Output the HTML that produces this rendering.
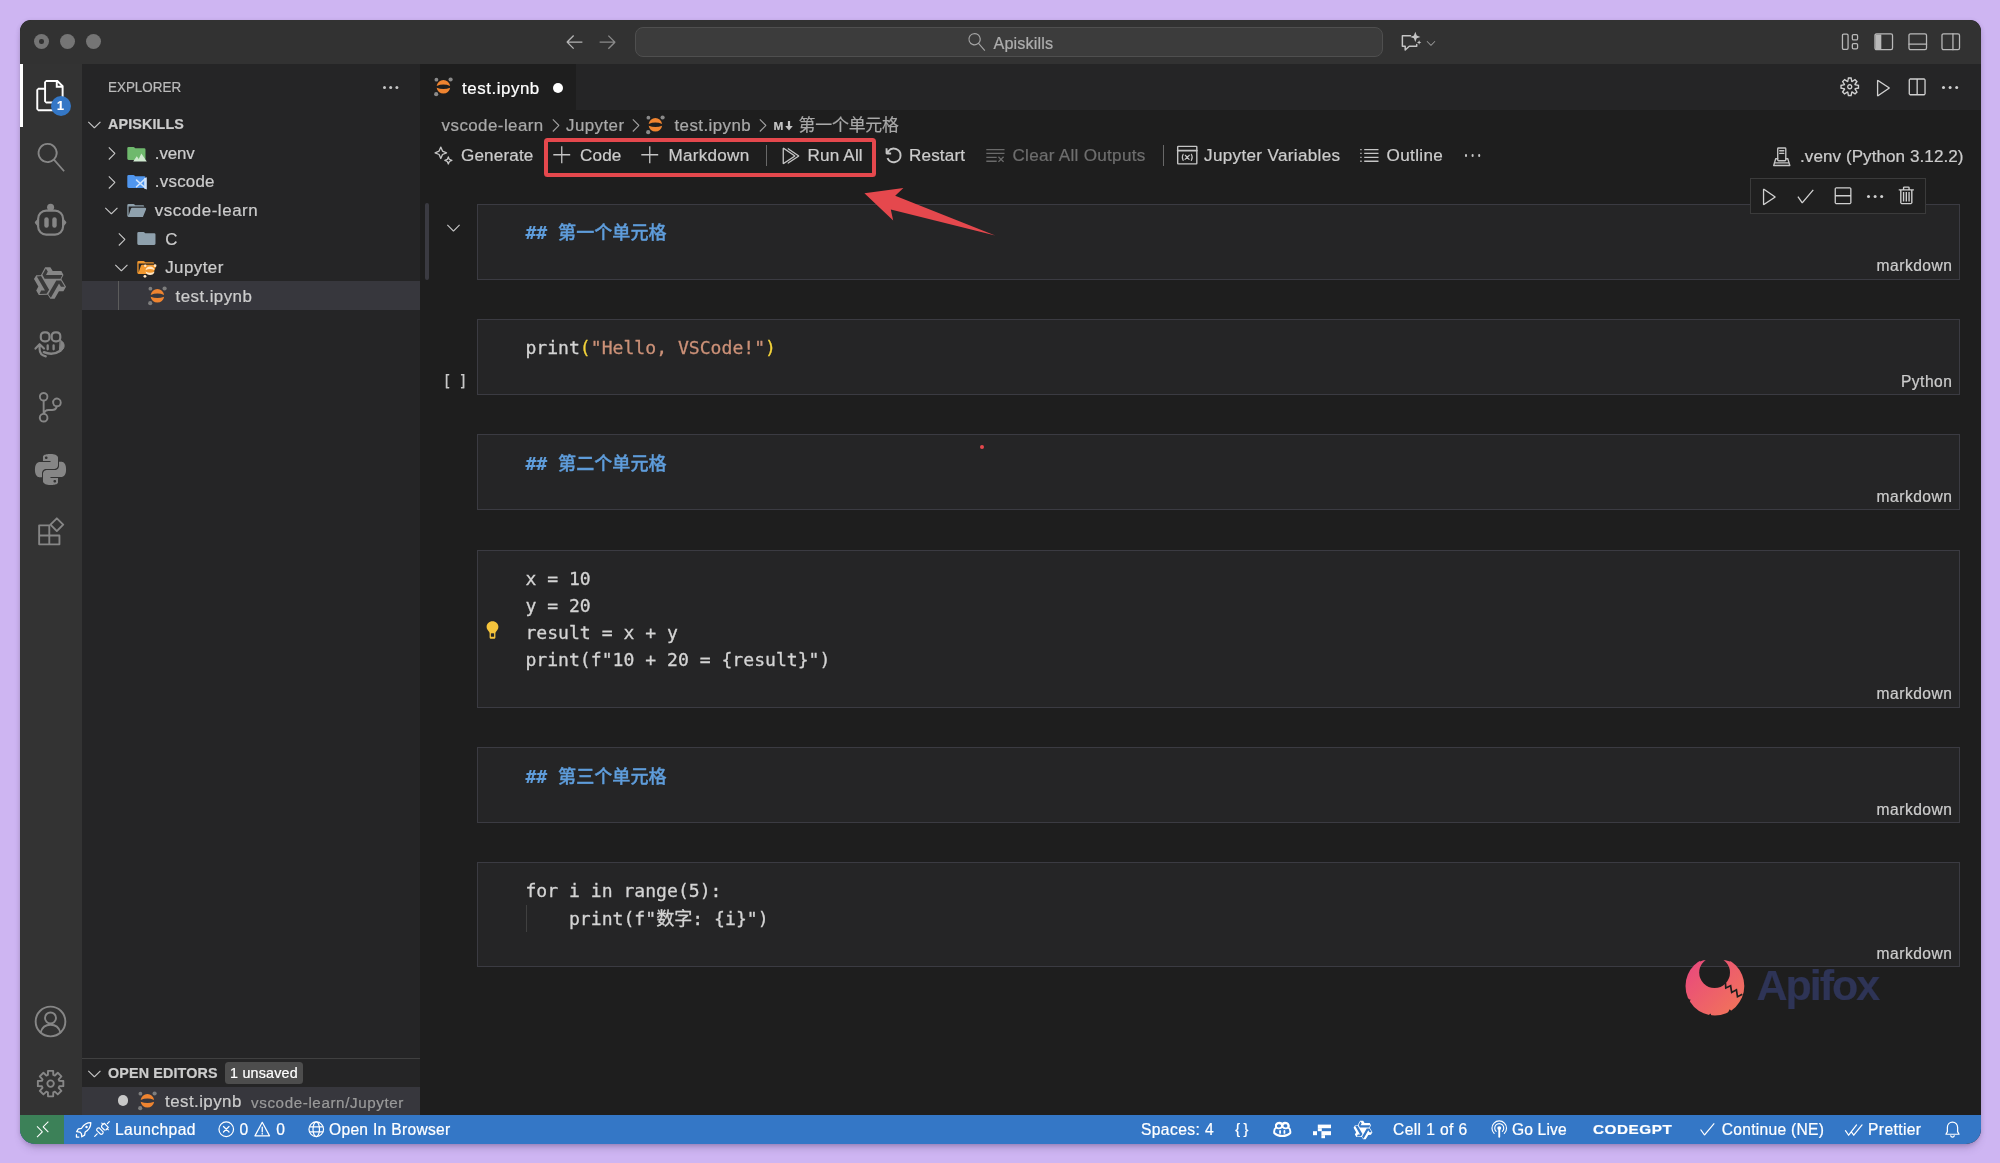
<!DOCTYPE html>
<html lang="zh">
<head>
<meta charset="utf-8">
<title>test.ipynb — Apiskills</title>
<style>
*{box-sizing:border-box;margin:0;padding:0}
html,body{width:2000px;height:1163px;overflow:hidden}
body{background:#ceb5f2;-webkit-font-smoothing:antialiased;-webkit-text-stroke:.22px;font-family:"Liberation Sans","Noto Sans CJK SC",sans-serif;color:#ccc;position:relative}
.abs{position:absolute}
svg{display:block;overflow:visible}
#win{will-change:transform;position:absolute;left:20px;top:20px;width:1960.7px;height:1123.7px;border-radius:11px 11px 15px 15px;overflow:hidden;background:#1e1e1e}
#shadow{position:absolute;left:20px;top:20px;width:1960.7px;height:1123.7px;border-radius:11px 11px 15px 15px;box-shadow:0 6px 10px -4px rgba(70,50,95,.36),0 1px 4px rgba(70,50,95,.2)}
#title{position:absolute;left:0;top:0;width:1961px;height:44.5px;background:#323232;border-radius:11px 11px 0 0}
.tl{position:absolute;top:13.5px;width:15.5px;height:15.5px;border-radius:50%;background:#757575}
#cmd{position:absolute;left:615px;top:6.5px;width:748px;height:30.3px;border-radius:8px;background:#3c3c3c;border:1.3px solid #4f4f4f}
#cmd span{position:absolute;left:357.5px;top:5.2px;font-size:16.2px;line-height:20px;color:#adadad;letter-spacing:.15px}
#act{position:absolute;left:0;top:44px;width:62px;height:1051px;background:#333333}
#act .ind{position:absolute;left:0;top:0;width:2.5px;height:63px;background:#fff}
#side{position:absolute;left:62px;top:44px;width:338px;height:1051px;background:#252526}
.row{position:absolute;left:0;width:338px;height:28.6px;font-size:16.9px;color:#ccc;white-space:nowrap;letter-spacing:.45px}
.row .t{position:absolute;top:4.6px;line-height:20px}
#tabs{position:absolute;left:400px;top:44px;width:1561px;height:46px;background:#252526}
#tab{position:absolute;left:0;top:0;width:156px;height:46px;background:#1e1e1e}
#ed{position:absolute;left:400px;top:90px;width:1561px;height:1006px;background:#1e1e1e}
.cell{position:absolute;left:57.4px;width:1482.6px;background:#252526;border:1px solid #3b3b42}
.code{font-family:"DejaVu Sans Mono","Liberation Mono",monospace;font-size:18.1px;line-height:27.3px;color:#d4d4d4;white-space:pre;position:absolute;left:47px;-webkit-text-stroke:.3px}
.cj{font-family:"Liberation Sans","Noto Sans CJK SC",sans-serif;font-size:18.1px;line-height:0}
.lang{position:absolute;right:6.5px;bottom:2.3px;font-size:15.6px;color:#ccc;line-height:20px;letter-spacing:.5px}
.md{color:#5f9ddb;font-weight:bold;-webkit-text-stroke:.1px}
.md .cj{font-weight:500;-webkit-text-stroke:.35px}
#status{position:absolute;left:0;top:1095.1px;width:1961px;height:29px;background:#3477c6;color:#fff;font-size:15.6px;white-space:nowrap;letter-spacing:.4px}
#status .s{position:absolute;top:5.3px;line-height:20px}
#remote{position:absolute;left:0;top:0;width:43.7px;height:29px;background:#3c8158}
</style>
</head>
<body>
<div id="shadow"></div>
<div id="win">
<div id="title"><div class="tl" style="left:13.8px"></div><div class="tl" style="left:39.8px"></div><div class="tl" style="left:65.8px"></div><div class="abs" style="left:19.3px;top:19px;width:4.5px;height:4.5px;border-radius:50%;background:#323232"></div><div class="abs" style="left:543.5px;top:11px;"><svg width="21" height="21" viewBox="0 0 16 16" fill="#b4b4b4"><path d="M7 3.093l-5 5V8.8l5 5 .707-.707-4.146-4.147H14v-1H3.56L7.707 3.8 7 3.093z"/></svg></div><div class="abs" style="left:577px;top:11px;"><svg width="21" height="21" viewBox="0 0 16 16" fill="#8a8a8a"><path d="M9 13.887l5-5V8.18l-5-5-.707.707 4.146 4.147H2v1h10.44L8.293 13.18l.707.707z"/></svg></div><div id="cmd"><div class="abs" style="left:332px;top:5.6px;"><svg width="18" height="18" viewBox="0 0 24 24" fill="#a4a4a4" transform="scale(-1,1)"><path d="M15.25 0a8.25 8.25 0 0 0-6.18 13.72L1 22.88l1.12 1 8.05-9.12A8.251 8.251 0 1 0 15.25.010V0zm0 15a6.75 6.75 0 1 1 0-13.5 6.75 6.75 0 0 1 0 13.5z"/></svg></div><span>Apiskills</span></div><div class="abs" style="left:1378.5px;top:10.5px;"><svg width="22.5" height="22.5" viewBox="0 0 16 16" fill="none" stroke="#c5c5c5" stroke-width="1.05" stroke-linejoin="round" stroke-linecap="round"><path d="M8.2 3.4H2.4v7.4h2v2.7l2.9-2.7h5.3V9.6"/><path d="M11.6.600l1 2.6 2.6 1-2.6 1-1 2.6-1-2.6-2.6-1 2.6-1z" fill="#c5c5c5" stroke="none"/><path d="M14.3 6.5l.45 1.15 1.15.45-1.15.45-.45 1.15-.45-1.15-1.15-.45 1.15-.45z" fill="#c5c5c5" stroke="none"/></svg></div><div class="abs" style="left:1403.5px;top:15.5px;"><svg width="14" height="14" viewBox="0 0 16 16" fill="#a0a0a0"><path d="M7.976 10.072l4.357-4.357.62.618L8.284 11h-.618L3 6.333l.619-.618 4.357 4.357z"/></svg></div><div class="abs" style="left:1821px;top:12px;"><svg width="19.5" height="19.5" viewBox="0 0 16 16" fill="none" stroke="#b9b9b9" stroke-width="1.05" stroke-linejoin="round" stroke-linecap="round"><rect x="1.2" y="1.8" width="4.6" height="12.4" rx="1"/><rect x="9.3" y="2.2" width="4.3" height="4.3" rx="1"/><rect x="9.3" y="9.5" width="4.3" height="4.3" rx="1"/></svg></div><div class="abs" style="left:1854px;top:12px;"><svg width="19.5" height="19.5" viewBox="0 0 16 16" fill="none" stroke="#b9b9b9" stroke-width="1.05" stroke-linejoin="round" stroke-linecap="round"><rect x=".8" y="1.5" width="14.4" height="13" rx="1.3"/><path d="M1.2 2h4.8v12H1.2z" fill="#b9b9b9" stroke="none"/></svg></div><div class="abs" style="left:1887.5px;top:12px;"><svg width="19.5" height="19.5" viewBox="0 0 16 16" fill="none" stroke="#b9b9b9" stroke-width="1.05" stroke-linejoin="round" stroke-linecap="round"><rect x=".8" y="1.5" width="14.4" height="13" rx="1.3"/><path d="M.8 10h14.4"/></svg></div><div class="abs" style="left:1921px;top:12px;"><svg width="19.5" height="19.5" viewBox="0 0 16 16" fill="none" stroke="#b9b9b9" stroke-width="1.05" stroke-linejoin="round" stroke-linecap="round"><rect x=".8" y="1.5" width="14.4" height="13" rx="1.3"/><path d="M9.8 1.5v13"/></svg></div></div>
<div id="act"><div class="ind"></div><div class="abs" style="left:15.4px;top:16.300000000000004px;"><svg width="31.2" height="31.2" viewBox="0 0 24 24" fill="#ffffff"><path d="M17.5 0h-9L7 1.5V6H2.5L1 7.5v15.07L2.5 24h12.07L16 22.57V18h4.7l1.3-1.43V4.5L17.5 0zm0 2.12l2.38 2.38H17.5V2.12zm-3 20.38h-12v-15H7v9.07L8.5 18h6v4.5zm6-6h-12v-15H16V6h4.5v10.5z"/></svg></div><div class="abs" style="left:30.5px;top:32px;width:20px;height:20px;border-radius:50%;background:#3477c6;color:#fff;font-size:12.5px;font-weight:bold;line-height:20px;text-align:center">1</div><div class="abs" style="left:16.5px;top:79px;"><svg width="29" height="29" viewBox="0 0 24 24" fill="#868686" transform="scale(-1,1)"><path d="M15.25 0a8.25 8.25 0 0 0-6.18 13.72L1 22.88l1.12 1 8.05-9.12A8.251 8.251 0 1 0 15.25.010V0zm0 15a6.75 6.75 0 1 1 0-13.5 6.75 6.75 0 0 1 0 13.5z"/></svg></div><div class="abs" style="left:14.799999999999997px;top:141.4px;"><svg width="31.2" height="31.2" viewBox="0 0 24 24" fill="none" stroke="#868686" stroke-width="1.65" stroke-linejoin="round" stroke-linecap="round"><rect x="2.4" y="4.3" width="19.2" height="18.5" rx="6.2"/><circle cx="12" cy="1.7" r="2.7" fill="#868686" stroke="none"/><path d="M2.4 11.4L.700 13.5l1.7 2.1M21.6 11.4l1.7 2.1-1.7 2.1"/><rect x="7.15" y="9.5" width="3.4" height="8" rx="1.7" fill="#868686" stroke="none"/><rect x="13.3" y="9.5" width="3.4" height="8" rx="1.7" fill="#868686" stroke="none"/></svg></div><svg class="abs" style="left:30.4px;top:218.60000000000002px" width="1" height="1" viewBox="0 0 1 1"><polygon points="-4.87,-15.7 0.36,-15.7 2.7,-11.9 11.4,-11.9 13.5,-8.1 11.4,-4 16.03,3.63 13.42,8.16 8.96,8.29 4.61,15.82 0.26,15.74 -2.24,11.87 -11.16,12.07 -13.78,7.54 -11.66,3.61 -16.01,-3.92 -13.76,-7.64 -9.16,-7.87" fill="#868686"/><polygon points="-4.15,-14.6 -2.2,-11.4 -4,-8.1 12.3,-8.1 10.6,-4.15 -5.4,-4.15 -7.6,-8.3" fill="#3a3a3a"/><polygon points="14.72,3.71 10.97,3.79 9.01,0.59 0.86,14.7 -1.71,11.25 6.29,-2.6 10.99,-2.43" fill="#3a3a3a"/><polygon points="-10.57,10.89 -8.77,7.61 -5.01,7.51 -13.16,-6.6 -8.89,-7.1 -0.89,6.75 -3.39,10.73" fill="#3a3a3a"/></svg><div class="abs" style="left:10px;top:260px;"><svg width="42" height="42" viewBox="0 0 42 42" fill="none" stroke="#868686" stroke-width="2.15" stroke-linejoin="round" stroke-linecap="round"><rect x="10.8" y="8.3" width="8.7" height="9" rx="3.6"/><rect x="21.7" y="8.3" width="8.6" height="9" rx="3.6"/><path d="M30.4 16.3C34.6 18 35 22.5 33 25.2c-.900 1.2-2 2-3.3 2.5z" fill="#868686" stroke-width="1"/><path d="M13.9 28.2c5.5 2.4 12 1.6 16.4-1.5" stroke-width="2.5"/><path d="M17.7 21.4v3.9M23.6 21.4v3.9" stroke-width="2.3"/><path d="M5.5 24.6l4.1-4.4 4.4 4.4M9.6 20.6v4.4c0 4 2.4 6.6 6.2 7.4"/></svg></div><div class="abs" style="left:14.950000000000003px;top:328.05px;"><svg width="30.5" height="30.5" viewBox="0 0 24 24" fill="#868686"><path d="M21.007 8.222A3.738 3.738 0 0 0 15.045 5.2a3.737 3.737 0 0 0 1.156 6.583 2.988 2.988 0 0 1-2.668 1.67h-2.99a4.456 4.456 0 0 0-2.989 1.165V7.4a3.737 3.737 0 1 0-1.494 0v9.117a3.776 3.776 0 1 0 1.816.099 2.99 2.99 0 0 1 2.668-1.667h2.99a4.484 4.484 0 0 0 4.223-3.039 3.736 3.736 0 0 0 3.25-3.687zM4.565 3.738a2.242 2.242 0 1 1 4.484 0 2.242 2.242 0 0 1-4.484 0zm4.484 16.441a2.242 2.242 0 1 1-4.484 0 2.242 2.242 0 0 1 4.484 0zm8.221-9.715a2.242 2.242 0 1 1 0-4.485 2.242 2.242 0 0 1 0 4.485z"/></svg></div><div class="abs" style="left:15.100000000000001px;top:390px;"><svg width="31" height="31" viewBox="0 0 24 24" fill="#868686"><path d="M14.25.18l.9.2.73.26.59.3.45.32.34.34.25.34.16.33.1.3.04.26.02.2-.01.13V8.5l-.05.63-.13.55-.21.46-.26.38-.3.31-.33.25-.35.19-.35.14-.33.1-.3.07-.26.04-.21.02H8.77l-.69.05-.59.14-.5.22-.41.27-.33.32-.27.35-.2.36-.15.37-.1.35-.07.32-.04.27-.02.21v3.06H3.17l-.21-.03-.28-.07-.32-.12-.35-.18-.36-.26-.36-.36-.35-.46-.32-.59-.28-.73-.21-.88-.14-1.05-.05-1.23.06-1.22.16-1.04.24-.87.32-.71.36-.57.4-.44.42-.33.42-.24.4-.16.36-.1.32-.05.24-.01h.16l.06.01h8.16v-.83H6.18l-.01-2.75-.02-.37.05-.34.11-.31.17-.28.25-.26.31-.23.38-.2.44-.18.51-.15.58-.12.64-.1.71-.06.77-.04.84-.02 1.27.05zm-6.3 1.98l-.23.33-.08.41.08.41.23.34.33.22.41.09.41-.09.33-.22.23-.34.08-.41-.08-.41-.23-.33-.33-.22-.41-.09-.41.09zm13.09 3.95l.28.06.32.12.35.18.36.27.36.35.35.47.32.59.28.73.21.88.14 1.04.05 1.23-.06 1.23-.16 1.04-.24.86-.32.71-.36.57-.4.45-.42.33-.42.24-.4.16-.36.09-.32.05-.24.02-.16-.01h-8.22v.82h5.84l.01 2.76.02.36-.05.34-.11.31-.17.29-.25.25-.31.24-.38.2-.44.17-.51.15-.58.13-.64.09-.71.07-.77.04-.84.01-1.27-.04-1.07-.14-.9-.2-.73-.25-.59-.3-.45-.33-.34-.34-.25-.34-.16-.33-.1-.3-.04-.25-.02-.2.01-.13v-5.34l.05-.64.13-.54.21-.46.26-.38.3-.32.33-.24.35-.2.35-.14.33-.1.3-.06.26-.04.21-.02.13-.01h5.84l.69-.05.59-.14.5-.21.41-.28.33-.32.27-.35.2-.36.15-.36.1-.35.07-.32.04-.28.02-.21V6.07h2.09l.14.01zm-6.47 14.25l-.23.33-.08.41.08.41.23.33.33.23.41.08.41-.08.33-.23.23-.33.08-.41-.08-.41-.23-.33-.33-.23-.41-.08-.41.08z"/></svg></div><div class="abs" style="left:15.4px;top:452.4px;"><svg width="31.2" height="31.2" viewBox="0 0 24 24" fill="none" stroke="#868686" stroke-width="1.45" stroke-linejoin="round" stroke-linecap="round"><path d="M3.2 7.2h7.8v7.8H3.2zM3.2 15h7.8v6.8H3.2zM11 15h7.8v6.8H11z"/><path d="M16.8 1.8l4.9 4.9-4.9 4.9-4.9-4.9z"/></svg></div><div class="abs" style="left:13.899999999999999px;top:940.8px;"><svg width="33" height="33" viewBox="0 0 24 24" fill="none" stroke="#868686" stroke-width="1.4" stroke-linejoin="round" stroke-linecap="round"><circle cx="12" cy="12" r="10.8"/><circle cx="12" cy="9.4" r="4"/><path d="M4.8 20c1-3.6 3.8-5.6 7.2-5.6s6.2 2 7.2 5.6"/></svg></div><div class="abs" style="left:14.799999999999997px;top:1004.3000000000002px;"><svg width="31.2" height="31.2" viewBox="0 0 24 24" fill="none" stroke="#868686" stroke-width="1.45" stroke-linejoin="round" stroke-linecap="round"><path d="M9.93 5.31L10.01 2.2L13.99 2.2L14.07 5.31L15.27 5.81L17.53 3.67L20.33 6.47L18.19 8.73L18.69 9.93L21.8 10.01L21.8 13.99L18.69 14.07L18.19 15.27L20.33 17.53L17.53 20.33L15.27 18.19L14.07 18.69L13.99 21.8L10.01 21.8L9.93 18.69L8.73 18.19L6.47 20.33L3.67 17.53L5.81 15.27L5.31 14.07L2.2 13.99L2.2 10.01L5.31 9.93L5.81 8.73L3.67 6.47L6.47 3.67L8.73 5.81Z"/><circle cx="12" cy="12" r="2.5"/></svg></div></div>
<div id="side"><div class="abs" style="left:26px;top:13px;font-size:15px;line-height:20px;color:#bbb;letter-spacing:0;transform:scaleX(.895);transform-origin:0 50%">EXPLORER</div><div class="abs" style="left:300.5px;top:21.8px;width:3px;height:3px;border-radius:50%;background:#c5c5c5;box-shadow:6.2px 0 0 #c5c5c5,12.4px 0 0 #c5c5c5"></div><div class="abs" style="left:2px;top:49.5px;"><svg width="20.8" height="20.8" viewBox="0 0 16 16" fill="#c5c5c5"><path d="M7.976 10.072l4.357-4.357.62.618L8.284 11h-.618L3 6.333l.619-.618 4.357 4.357z"/></svg></div><div class="abs" style="left:26px;top:50.3px;font-size:14.3px;line-height:20px;color:#ccc;font-weight:bold;letter-spacing:.15px">APISKILLS</div><div class="row" style="top:75.2px;"><div class="abs" style="left:18.5px;top:3.9px;"><svg width="20.8" height="20.8" viewBox="0 0 16 16" fill="#c5c5c5"><path d="M10.072 8.024L5.715 3.667l.618-.62L11 7.716v.618L6.333 13l-.618-.619 4.357-4.357z"/></svg></div><div class="abs" style="left:43.6px;top:3.4px;"><svg width="20.8" height="20.8" viewBox="0 0 32 32"><path d="M13.84376,7.53645l-1.28749-1.0729A2,2,0,0,0,11.27591,6H4A2,2,0,0,0,2,8V24a2,2,0,0,0,2,2H28a2,2,0,0,0,2-2V10a2,2,0,0,0-2-2H15.12412A2,2,0,0,1,13.84376,7.53645Z" fill="#6fb96d"/><path d="M11 28.6L16.6 20.4L19.6 24.6L23.6 16.2L32 28.6Z" fill="#cfe9cf"/></svg></div><div class="t" style="left:72.8px;top:4.6px"><span style="letter-spacing:-.1px">.venv</span></div></div><div class="row" style="top:103.8px;"><div class="abs" style="left:18.5px;top:3.9px;"><svg width="20.8" height="20.8" viewBox="0 0 16 16" fill="#c5c5c5"><path d="M10.072 8.024L5.715 3.667l.618-.62L11 7.716v.618L6.333 13l-.618-.619 4.357-4.357z"/></svg></div><div class="abs" style="left:43.6px;top:3.4px;"><svg width="20.8" height="20.8" viewBox="0 0 32 32"><path d="M13.84376,7.53645l-1.28749-1.0729A2,2,0,0,0,11.27591,6H4A2,2,0,0,0,2,8V24a2,2,0,0,0,2,2H28a2,2,0,0,0,2-2V10a2,2,0,0,0-2-2H15.12412A2,2,0,0,1,13.84376,7.53645Z" fill="#5096ee"/><g stroke="#cfe3fb" stroke-width="2.4" fill="none" stroke-linecap="round"><path d="M29.5 12.2L16.2 24.2M29.5 25.8L16.2 14"/></g><path d="M28 11.2l4-1.6v19l-4-1.8z" fill="#cfe3fb"/></svg></div><div class="t" style="left:72.8px;top:4.6px"><span style="letter-spacing:.25px">.vscode</span></div></div><div class="row" style="top:132.4px;"><div class="abs" style="left:18.5px;top:3.9px;"><svg width="20.8" height="20.8" viewBox="0 0 16 16" fill="#c5c5c5"><path d="M7.976 10.072l4.357-4.357.62.618L8.284 11h-.618L3 6.333l.619-.618 4.357 4.357z"/></svg></div><div class="abs" style="left:43.6px;top:3.4px;"><svg width="20.8" height="20.8" viewBox="0 0 32 32"><path d="M28.96692,12H9.44152a2,2,0,0,0-1.89737,1.36754L4,24V10H28a2,2,0,0,0-2-2H15.1241a2,2,0,0,1-1.28038-.46357L12.5563,6.46357A2,2,0,0,0,11.27592,6H4A2,2,0,0,0,2,8V24a2,2,0,0,0,2,2H26l4.80523-11.21213A2,2,0,0,0,28.96692,12Z" fill="#8fa1ad"/></svg></div><div class="t" style="left:72.8px;top:4.6px"><span style="letter-spacing:.56px">vscode-learn</span></div></div><div class="row" style="top:161px;"><div class="abs" style="left:29px;top:3.9px;"><svg width="20.8" height="20.8" viewBox="0 0 16 16" fill="#c5c5c5"><path d="M10.072 8.024L5.715 3.667l.618-.62L11 7.716v.618L6.333 13l-.618-.619 4.357-4.357z"/></svg></div><div class="abs" style="left:54px;top:3.4px;"><svg width="20.8" height="20.8" viewBox="0 0 32 32"><path d="M13.84376,7.53645l-1.28749-1.0729A2,2,0,0,0,11.27591,6H4A2,2,0,0,0,2,8V24a2,2,0,0,0,2,2H28a2,2,0,0,0,2-2V10a2,2,0,0,0-2-2H15.12412A2,2,0,0,1,13.84376,7.53645Z" fill="#8fa1ad"/></svg></div><div class="t" style="left:83.2px;top:4.6px">C</div></div><div class="row" style="top:189.6px;"><div class="abs" style="left:29px;top:3.9px;"><svg width="20.8" height="20.8" viewBox="0 0 16 16" fill="#c5c5c5"><path d="M7.976 10.072l4.357-4.357.62.618L8.284 11h-.618L3 6.333l.619-.618 4.357 4.357z"/></svg></div><div class="abs" style="left:54px;top:3.4px;"><svg width="20.8" height="20.8" viewBox="0 0 32 32"><path d="M28.96692,12H9.44152a2,2,0,0,0-1.89737,1.36754L4,24V10H28a2,2,0,0,0-2-2H15.1241a2,2,0,0,1-1.28038-.46357L12.5563,6.46357A2,2,0,0,0,11.27592,6H4A2,2,0,0,0,2,8V24a2,2,0,0,0,2,2H26l4.80523-11.21213A2,2,0,0,0,28.96692,12Z" fill="#f1982f"/><path d="M14.6 20.3a7.2 7.2 0 0 1 14 0q-7-3.6-14 0z" fill="#ffe6c4"/><path d="M14.6 22.3a7.2 7.2 0 0 0 14 0q-7 3.6-14 0z" fill="#ffe6c4"/><circle cx="14.2" cy="13.6" r="1.9" fill="#ffe6c4"/><circle cx="29.4" cy="13.4" r="2.1" fill="#ffe6c4"/><circle cx="13.8" cy="29.8" r="2.2" fill="#ffe6c4"/></svg></div><div class="t" style="left:83.2px;top:4.6px">Jupyter</div></div><div class="row" style="top:217.2px;background:#37373d;"><div class="abs" style="left:64.5px;top:4.5px;"><svg width="20.8" height="20.8" viewBox="0 0 20.8 20.8"><path d="M3.66 8.9A6.8 6.8 0 0 1 17.14 8.9Q10.4 6.3 3.66 8.9Z" fill="#ef8430"/><path d="M3.66 10.7A6.8 6.8 0 0 0 17.14 10.7Q10.4 13.3 3.66 10.7Z" fill="#ef8430"/><circle cx="3.4" cy="2.7" r="1.9" fill="#7d7d7d"/><circle cx="17.6" cy="2.5" r="2.1" fill="#7d7d7d"/><circle cx="3.2" cy="17.2" r="2.1" fill="#7d7d7d"/></svg></div><div class="t" style="left:93.5px;top:6px">test.ipynb</div><div class="abs" style="left:36px;top:0;width:1px;height:28.6px;background:#5c5c5c"></div></div><div class="abs" style="left:0;top:994.2px;width:338px;height:1.2px;background:#404040"></div><div class="abs" style="left:2px;top:998.6px;"><svg width="20.8" height="20.8" viewBox="0 0 16 16" fill="#c5c5c5"><path d="M7.976 10.072l4.357-4.357.62.618L8.284 11h-.618L3 6.333l.619-.618 4.357 4.357z"/></svg></div><div class="abs" style="left:26px;top:999.2px;font-size:14.3px;line-height:20px;color:#ccc;font-weight:bold;letter-spacing:.15px">OPEN EDITORS</div><div class="abs" style="left:143.2px;top:998.2px;width:77.6px;height:22px;border-radius:3.5px;background:#4d4d4d;color:#fff;font-size:14.3px;line-height:22px;text-align:center;white-space:nowrap;letter-spacing:.2px">1 unsaved</div><div class="row" style="top:1022.6px;background:#37373d;height:28px"><div class="abs" style="left:35.6px;top:8.6px;width:10.6px;height:10.6px;border-radius:50%;background:#c8c8c8"></div><div class="abs" style="left:54.5px;top:4.6px;"><svg width="20.8" height="20.8" viewBox="0 0 20.8 20.8"><path d="M3.66 8.9A6.8 6.8 0 0 1 17.14 8.9Q10.4 6.3 3.66 8.9Z" fill="#ef8430"/><path d="M3.66 10.7A6.8 6.8 0 0 0 17.14 10.7Q10.4 13.3 3.66 10.7Z" fill="#ef8430"/><circle cx="3.4" cy="2.7" r="1.9" fill="#7d7d7d"/><circle cx="17.6" cy="2.5" r="2.1" fill="#7d7d7d"/><circle cx="3.2" cy="17.2" r="2.1" fill="#7d7d7d"/></svg></div><div class="t" style="left:83px;top:5.6px">test.ipynb</div><div class="t" style="left:169px;font-size:15.2px;color:#9a9a9a;top:6px;letter-spacing:.6px">vscode-learn/Jupyter</div></div></div>
<div id="tabs"><div id="tab"><div class="abs" style="left:12.5px;top:13.3px;"><svg width="20.8" height="20.8" viewBox="0 0 20.8 20.8"><path d="M3.66 8.9A6.8 6.8 0 0 1 17.14 8.9Q10.4 6.3 3.66 8.9Z" fill="#ef8430"/><path d="M3.66 10.7A6.8 6.8 0 0 0 17.14 10.7Q10.4 13.3 3.66 10.7Z" fill="#ef8430"/><circle cx="3.4" cy="2.7" r="1.9" fill="#8a8a8a"/><circle cx="17.6" cy="2.5" r="2.1" fill="#8a8a8a"/><circle cx="3.2" cy="17.2" r="2.1" fill="#8a8a8a"/></svg></div><div class="abs" style="left:42px;top:14.5px;font-size:16.9px;line-height:20px;color:#fff;letter-spacing:.55px;white-space:nowrap">test.ipynb</div><div class="abs" style="left:132.8px;top:18.7px;width:10.4px;height:10.4px;border-radius:50%;background:#fff"></div></div><div class="abs" style="left:1419px;top:12.4px;"><svg width="21.5" height="21.5" viewBox="0 0 16 16" fill="#d0d0d0"><path d="M9.1 4.4L8.6 2H7.4l-.5 2.4-.7.3-2-1.3-.9.8 1.3 2-.2.7-2.4.5v1.2l2.4.5.3.8-1.3 2 .8.8 2-1.3.8.3.4 2.3h1.2l.5-2.4.8-.3 2 1.3.8-.8-1.3-2 .3-.8 2.3-.4V7.4l-2.4-.500-.300-.800 1.3-2-.800-.800-2 1.3-.700-.200zM9.4 1l.500 2.4L12 2.1l2 2-1.4 2.1 2.4.400v2.8l-2.4.500L14 12l-2 2-2.1-1.4-.500 2.4H6.6l-.500-2.4L4 13.9l-2-2 1.4-2.1L1 9.4V6.6l2.4-.500L2.1 4l2-2 2.1 1.4.400-2.4h2.8zm.600 7c0 1.1-.900 2-2 2s-2-.900-2-2 .900-2 2-2 2 .900 2 2zM8 9c.600 0 1-.400 1-1s-.400-1-1-1-1 .400-1 1 .400 1 1 1z"/></svg></div><div class="abs" style="left:1452.8px;top:12.9px;"><svg width="21" height="21" viewBox="0 0 16 16" fill="#d0d0d0"><path d="M3.78 2L3 2.41v12l.78.42 9-6V8l-9-6zM4 13.48V3.35l7.6 5.07L4 13.48z"/></svg></div><div class="abs" style="left:1486.1px;top:12.9px;"><svg width="21" height="21" viewBox="0 0 16 16" fill="#d0d0d0"><path d="M14 1H3L2 2v11l1 1h11l1-1V2l-1-1zM8 13H3V2h5v11zm6 0H9V2h5v11z"/></svg></div><div class="abs" style="left:1522.3px;top:22.2px;width:3px;height:3px;border-radius:50%;background:#d0d0d0;box-shadow:6.6px 0 0 #d0d0d0,13.2px 0 0 #d0d0d0"></div></div>
<div id="ed"><div class="abs" style="left:21.600000000000023px;top:5.5px;font-size:16.9px;line-height:20px;color:#a9a9a9;white-space:nowrap;letter-spacing:.45px;">vscode-learn</div><div class="abs" style="left:125.30000000000004px;top:5px;"><svg width="20.8" height="20.8" viewBox="0 0 16 16" fill="#a0a0a0"><path d="M10.072 8.024L5.715 3.667l.618-.62L11 7.716v.618L6.333 13l-.618-.619 4.357-4.357z"/></svg></div><div class="abs" style="left:146px;top:5.5px;font-size:16.9px;line-height:20px;color:#a9a9a9;white-space:nowrap;letter-spacing:.45px;">Jupyter</div><div class="abs" style="left:204.80000000000004px;top:5px;"><svg width="20.8" height="20.8" viewBox="0 0 16 16" fill="#a0a0a0"><path d="M10.072 8.024L5.715 3.667l.618-.62L11 7.716v.618L6.333 13l-.618-.619 4.357-4.357z"/></svg></div><div class="abs" style="left:225.29999999999995px;top:5px;"><svg width="20.8" height="20.8" viewBox="0 0 20.8 20.8"><path d="M3.66 8.9A6.8 6.8 0 0 1 17.14 8.9Q10.4 6.3 3.66 8.9Z" fill="#ef8430"/><path d="M3.66 10.7A6.8 6.8 0 0 0 17.14 10.7Q10.4 13.3 3.66 10.7Z" fill="#ef8430"/><circle cx="3.4" cy="2.7" r="1.9" fill="#8a8a8a"/><circle cx="17.6" cy="2.5" r="2.1" fill="#8a8a8a"/><circle cx="3.2" cy="17.2" r="2.1" fill="#8a8a8a"/></svg></div><div class="abs" style="left:254.39999999999998px;top:5.5px;font-size:16.9px;line-height:20px;color:#a9a9a9;white-space:nowrap;letter-spacing:.45px;">test.ipynb</div><div class="abs" style="left:332.30000000000007px;top:5px;"><svg width="20.8" height="20.8" viewBox="0 0 16 16" fill="#a0a0a0"><path d="M10.072 8.024L5.715 3.667l.618-.62L11 7.716v.618L6.333 13l-.618-.619 4.357-4.357z"/></svg></div><div class="abs" style="left:353.4px;top:9px;font-size:11.8px;font-weight:bold;color:#c5c5c5;line-height:14px;letter-spacing:0;white-space:nowrap">M</div><div class="abs" style="left:364.7px;top:11.2px;"><svg width="8" height="10" viewBox="0 0 8 10" fill="#c5c5c5"><path d="M2.9 0h2.2v5h2.7L4 9.6.200 5h2.7z"/></svg></div><div class="abs" style="left:378.6px;top:5.5px;font-size:16.9px;line-height:20px;color:#a9a9a9;white-space:nowrap;letter-spacing:.45px;letter-spacing:-.2px">第一个单元格</div><div class="abs" style="left:13px;top:35px;"><svg width="20.8" height="20.8" viewBox="0 0 16 16" fill="none" stroke="#c5c5c5" stroke-width="1" stroke-linejoin="round" stroke-linecap="round"><path d="M6 1.6l1.3 3.1 3.1 1.3-3.1 1.3L6 10.4 4.7 7.3 1.6 6l3.1-1.3z"/><path d="M11.8 9.2l.8 1.9 1.9.8-1.9.8-.8 1.9-.8-1.9-1.9-.8 1.9-.8z"/></svg></div><div class="abs" style="left:41px;top:36.4px;font-size:17.1px;line-height:20px;color:#ccc;white-space:nowrap;letter-spacing:.15px;color:#cccccc">Generate</div><div class="abs" style="left:131.5px;top:35px;"><svg width="20.8" height="20.8" viewBox="0 0 16 16" fill="#c5c5c5"><path d="M14 7v1H8v6H7V8H1V7h6V1h1v6h6z"/></svg></div><div class="abs" style="left:160px;top:36.4px;font-size:17.1px;line-height:20px;color:#ccc;white-space:nowrap;letter-spacing:.15px;color:#cccccc">Code</div><div class="abs" style="left:220px;top:35px;"><svg width="20.8" height="20.8" viewBox="0 0 16 16" fill="#c5c5c5"><path d="M14 7v1H8v6H7V8H1V7h6V1h1v6h6z"/></svg></div><div class="abs" style="left:248.39999999999998px;top:36.4px;font-size:17.1px;line-height:20px;color:#ccc;white-space:nowrap;letter-spacing:.15px;color:#cccccc"><span style="letter-spacing:.28px">Markdown</span></div><div class="abs" style="left:346px;top:35.2px;width:1.2px;height:20.5px;background:#686868"></div><div class="abs" style="left:360px;top:35px;"><svg width="20.8" height="20.8" viewBox="0 0 16 16" fill="#c5c5c5"><path d="M2.78 2L2 2.41v12l.78.42 9-6V8l-9-6zM3 13.48V3.35l7.6 5.07L3 13.48zM6 14.683l8.78-5.853V8L6 2.147V3.35l7.6 5.07L6 13.48v1.203z"/></svg></div><div class="abs" style="left:387.6px;top:36.4px;font-size:17.1px;line-height:20px;color:#ccc;white-space:nowrap;letter-spacing:.15px;color:#cccccc">Run All</div><div class="abs" style="left:462.5px;top:35px;"><svg width="20.8" height="20.8" viewBox="0 0 16 16" fill="#c5c5c5"><path d="M12.75 8a4.5 4.5 0 0 1-8.61 1.834l-1.391.565A6.001 6.001 0 0 0 14.25 8 6 6 0 0 0 3.5 4.334V2.5H2v4l.75.75h3.5v-1.5H4.352A4.5 4.5 0 0 1 12.75 8z"/></svg></div><div class="abs" style="left:489px;top:36.4px;font-size:17.1px;line-height:20px;color:#ccc;white-space:nowrap;letter-spacing:.15px;color:#cccccc">Restart</div><div class="abs" style="left:564.5px;top:35px;"><svg width="20.8" height="20.8" viewBox="0 0 16 16" fill="#6a6a6a"><path d="M10 12.6l.7.7 1.6-1.6 1.6 1.6.8-.7L13 11l1.7-1.6-.8-.8-1.6 1.7-1.6-1.7-.7.8 1.6 1.6-1.6 1.6zM1 4h14V3H1v1zm0 3h14V6H1v1zm8 2.5V9H1v1h8v-.5zM9 13v-1H1v1h8z"/></svg></div><div class="abs" style="left:592.5px;top:36.4px;font-size:17.1px;line-height:20px;color:#ccc;white-space:nowrap;letter-spacing:.15px;color:#6e6e6e"><span style="letter-spacing:.28px">Clear All Outputs</span></div><div class="abs" style="left:742.5px;top:35.2px;width:1.2px;height:20.5px;background:#686868"></div><div class="abs" style="left:755.8px;top:34.2px;"><svg width="22.5" height="22.5" viewBox="0 0 16 16" fill="none" stroke="#c5c5c5" stroke-width="1" stroke-linejoin="round" stroke-linecap="round"><rect x="1.2" y="1.7" width="13.6" height="12.4" rx=".4"/><path d="M1.2 4.7h13.6" stroke-width="1.3"/><g stroke-width=".8"><path d="M5.1 7.3q-1.3 2.2 0 4.4M10.9 7.3q1.3 2.2 0 4.4M6.6 8l2.7 3M9.5 8l-3.1 3"/></g></svg></div><div class="abs" style="left:784px;top:36.4px;font-size:17.1px;line-height:20px;color:#ccc;white-space:nowrap;letter-spacing:.15px;color:#cccccc"><span style="letter-spacing:.33px">Jupyter Variables</span></div><div class="abs" style="left:938.5px;top:35px;"><svg width="20.8" height="20.8" viewBox="0 0 16 16" fill="#c5c5c5"><path d="M2 3H1v1h1V3zm0 3H1v1h1V6zM1 9h1v1H1V9zm1 3H1v1h1v-1zm2-9h11v1H4V3zm11 3H4v1h11V6zM4 9h11v1H4V9zm11 3H4v1h11v-1z"/></svg></div><div class="abs" style="left:966.5999999999999px;top:36.4px;font-size:17.1px;line-height:20px;color:#ccc;white-space:nowrap;letter-spacing:.15px;color:#cccccc"><span style="letter-spacing:.35px">Outline</span></div><div class="abs" style="left:1044.7px;top:44px;width:2.8px;height:2.8px;border-radius:50%;background:#c5c5c5;box-shadow:6.6px 0 0 #c5c5c5,13.2px 0 0 #c5c5c5"></div><div class="abs" style="left:1351px;top:35.5px;"><svg width="21.5" height="21.5" viewBox="0 0 16 16" fill="none" stroke="#c5c5c5" stroke-width="1" stroke-linejoin="round" stroke-linecap="round"><rect x="5" y="1.5" width="6" height="9.5" rx=".6"/><path d="M6.5 3.5h3M6.5 5.5h3"/><path d="M3.5 9.5h1.5M11 9.5h1.5M3.5 9.5l-1.5 5h12l-1.5-5M2.5 12.5h11"/></svg></div><div class="abs" style="left:1380px;top:36.4px;font-size:17.1px;line-height:20px;color:#ccc;white-space:nowrap;letter-spacing:.15px;color:#cccccc"><span style="letter-spacing:.05px;position:relative;top:.9px">.venv (Python 3.12.2)</span></div><div class="abs" style="left:5.3px;top:93.4px;width:4px;height:76.5px;border-radius:2px;background:#3a3a41"></div><div class="abs" style="left:23.30000000000001px;top:106.5px;"><svg width="21" height="21" viewBox="0 0 16 16" fill="#c5c5c5"><path d="M7.976 10.072l4.357-4.357.62.618L8.284 11h-.618L3 6.333l.619-.618 4.357 4.357z"/></svg></div><div class="cell" style="top:93.69999999999999px;height:76px"><div class="code md" style="top:14.5px">## <span class="cj">第一个单元格</span></div><div class="lang">markdown</div></div><div class="cell" style="top:209.3px;height:75.6px"><div class="code " style="top:13.5px">print<span style="color:#f3d33a">(</span><span style="color:#cc9178">"Hello, VSCode!"</span><span style="color:#f3d33a">)</span></div><div class="lang">Python</div></div><div class="abs" style="left:22.5px;top:261.3px;font-family:'DejaVu Sans Mono',monospace;font-size:15.2px;line-height:20px;color:#c8c8c8;letter-spacing:-1.2px;white-space:pre">[ ]</div><div class="cell" style="top:324.4px;height:76px"><div class="code md" style="top:14.5px">## <span class="cj">第二个单元格</span></div><div class="lang">markdown</div></div><div class="cell" style="top:440.1px;height:157.5px"><div class="code " style="top:13.5px">x = 10
y = 20
result = x + y
print(f"10 + 20 = {result}")</div><div class="abs" style="left:6.5px;top:68.5px;"><svg width="15" height="20" viewBox="0 0 15 20"><path d="M7.5 1.2c-3.4 0-5.9 2.5-5.9 5.6 0 2 1 3.4 2 4.5.700.8 1 1.4 1 2.3v3.6c0 .9.7 1.6 1.6 1.6h2.6c.9 0 1.6-.7 1.6-1.6v-3.6c0-.9.3-1.5 1-2.3 1-1.1 2-2.5 2-4.5 0-3.1-2.5-5.6-5.9-5.6z" fill="#f5c43c"/><rect x="5.9" y="13.2" width="3.2" height="3.6" rx=".6" fill="#252526"/></svg></div><div class="lang">markdown</div></div><div class="cell" style="top:637px;height:76.4px"><div class="code md" style="top:14.5px">## <span class="cj">第三个单元格</span></div><div class="lang">markdown</div></div><div class="cell" style="top:752.3px;height:104.6px"><div class="code " style="top:13.5px">for i in range(5):
<span style="position:relative;top:1px">    print(f"<span class="cj">数字</span>: {i}")</span></div><div class="abs" style="left:47.5px;top:41.5px;width:1px;height:27px;background:#404040"></div><div class="lang">markdown</div></div><div class="abs" style="left:1330px;top:67.69999999999999px;width:176px;height:36.2px;background:#1f1f1f;border:1px solid #3b3b3b"><div class="abs" style="left:8px;top:7.3px;"><svg width="20.8" height="20.8" viewBox="0 0 16 16" fill="#d0d0d0"><path d="M3.78 2L3 2.41v12l.78.42 9-6V8l-9-6zM4 13.48V3.35l7.6 5.07L4 13.48z"/></svg></div><div class="abs" style="left:44px;top:7.3px;"><svg width="20.8" height="20.8" viewBox="0 0 16 16" fill="#d0d0d0"><path d="M14.431 3.323l-8.47 10-.79-.036-3.35-4.77.818-.574 2.978 4.24 8.051-9.506.764.646z"/></svg></div><div class="abs" style="left:80.7px;top:7.6px;"><svg width="20.8" height="20.8" viewBox="0 0 16 16" fill="#d0d0d0"><path d="M14 1H3L2 2v11l1 1h11l1-1V2l-1-1zm0 12H3V8h11v5zm0-6H3V2h11v5z"/></svg></div><div class="abs" style="left:115.5px;top:16.3px;width:3px;height:3px;border-radius:50%;background:#d0d0d0;box-shadow:6.6px 0 0 #d0d0d0,13.2px 0 0 #d0d0d0"></div><div class="abs" style="left:144.9px;top:6.6px;"><svg width="22" height="22" viewBox="0 0 16 16" fill="#d0d0d0"><path d="M10 3h3v1h-1v9l-1 1H4l-1-1V4H2V3h3V2a1 1 0 0 1 1-1h3a1 1 0 0 1 1 1v1zM9 2H6v1h3V2zM4 13h7V4H4v9zm2-8H5v7h1V5zm1 0h1v7H7V5zm2 0h1v7H9V5z"/></svg></div></div><div class="abs" style="left:559.5px;top:334.5px;width:4px;height:4px;border-radius:50%;background:#e5484d"></div></div>
<div id="status"><div id="remote"><div class="abs" style="left:12.5px;top:4.5px;"><svg width="19.5" height="19.5" viewBox="0 0 16 16" fill="#ffffff"><path d="M12.904 9.57L8.928 5.596l3.976-3.976-.619-.62L8 5.286v.619l4.285 4.285.619-.62zM3 5.62l4.072 4.05L3 13.763l.619.618L8 10v-.619L3.619 5 3 5.62z"/></svg></div></div><div class="abs" style="left:53.5px;top:4.8px;"><svg width="19.5" height="19.5" viewBox="0 0 16 16" fill="none" stroke="#ffffff" stroke-width="1.05" stroke-linejoin="round" stroke-linecap="round"><path d="M13.8 2.2c-3.2 0-5.8 1.6-7.6 4.6l-2.6.500-1.4 2.3 2.6.300 1.3 1.3.300 2.6 2.3-1.4.500-2.6c3-1.8 4.6-4.4 4.6-7.6z"/><circle cx="10.3" cy="5.7" r="1" fill="#fff" stroke="none"/><path d="M2 12v2h2"/></svg></div><div class="abs" style="left:72.5px;top:4.8px;"><svg width="18" height="18" viewBox="0 0 16 16" fill="none" stroke="#ffffff" stroke-width="1.05" stroke-linejoin="round" stroke-linecap="round"><path d="M1.5 14.5l2.2-2.2M14.5 1.5l-1.7 1.7"/><path d="M3.3 9.2l3.5 3.5c1.3.3 2.5-.900 2.2-2.2L5.5 7c-1.3-.3-2.5.900-2.2 2.2z"/><path d="M7.6 6.3l2.6 2.6 1.6-.2 1.8-2.2-3.6-3.6-2.2 1.8z"/><path d="M9 4l-1.2-1.2M12.5 7.5l1.2 1.2" stroke-width=".9"/></svg></div><div class="s" style="left:95px;">Launchpad</div><div class="abs" style="left:196.5px;top:4.8px;"><svg width="18.5" height="18.5" viewBox="0 0 16 16" fill="none" stroke="#ffffff" stroke-width="1.05" stroke-linejoin="round" stroke-linecap="round"><circle cx="8" cy="8" r="6.3"/><path d="M5.6 5.6l4.8 4.8M10.4 5.6l-4.8 4.8"/></svg></div><div class="s" style="left:219.4px;">0</div><div class="abs" style="left:233.3px;top:4.8px;"><svg width="18.5" height="18.5" viewBox="0 0 16 16" fill="none" stroke="#ffffff" stroke-width="1.05" stroke-linejoin="round" stroke-linecap="round"><path d="M8 2L1.7 13.7h12.6z"/><path d="M8 6.2v4M8 11.6v.5" stroke-width="1.15"/></svg></div><div class="s" style="left:256.2px;">0</div><div class="abs" style="left:286.5px;top:4.8px;"><svg width="18.5" height="18.5" viewBox="0 0 16 16" fill="none" stroke="#ffffff" stroke-width="1.05" stroke-linejoin="round" stroke-linecap="round"><circle cx="8" cy="8" r="6.3"/><ellipse cx="8" cy="8" rx="2.8" ry="6.3"/><path d="M2.2 6h11.6M2.2 10.2h11.6"/></svg></div><div class="s" style="left:309px;"><span style="letter-spacing:.3px">Open In Browser</span></div><div class="s" style="left:1121px;">Spaces: 4</div><div class="s" style="left:1215.3px;font-size:14.5px;letter-spacing:-.300px;top:3.6px">{ }</div><div class="abs" style="left:1251.5px;top:3.8px;"><svg width="20.5" height="20.5" viewBox="0 0 16 16" fill="none" stroke="#ffffff" stroke-width="1.5" stroke-linejoin="round" stroke-linecap="round"><path d="M3.2 6.7c-.5-1.8.1-3.3 1.6-3.6 1.5-.3 2.9.3 3.2 1.5.3-1.2 1.7-1.8 3.2-1.5 1.5.3 2.1 1.8 1.6 3.6 1 .7 1.5 1.6 1.5 2.8v1.4c-1.5 1.5-3.7 2.4-6.3 2.4s-4.8-.900-6.3-2.4V9.5c0-1.2.5-2.1 1.5-2.8z"/><path d="M6.3 9.3v1.6M9.7 9.3v1.6" stroke-width="1.4"/><path d="M4.7 3.4c1.7-.3 3 .4 3.1 1.7.1 1.3-.8 2.1-2.4 2.2-1.5.1-2.3-.6-2.3-1.8 0-1.1.6-1.9 1.6-2.1zM11.3 3.4c-1.7-.3-3 .4-3.1 1.7-.1 1.3.8 2.1 2.4 2.2 1.5.1 2.3-.6 2.3-1.8 0-1.1-.6-1.9-1.6-2.1z"/></svg></div><svg class="abs" style="left:0;top:0" width="1" height="1" viewBox="0 0 1 1" fill="#fff"><g transform="translate(-20,-1114.8)"><rect x="1317.8" y="1124.4" width="13.2" height="3.6"/><rect x="1317.8" y="1128" width="4" height="3"/><rect x="1321.4" y="1131" width="9.6" height="4"/><rect x="1321.4" y="1135" width="3.6" height="3"/><rect x="1313" y="1131" width="4" height="4"/></g></svg><svg class="abs" style="left:1343px;top:15.200000000000045px" width="1" height="1" viewBox="0 0 1 1"><polygon points="-2.87,-9.26 0.21,-9.26 1.59,-7.02 6.73,-7.02 7.96,-4.78 6.73,-2.36 9.46,2.14 7.92,4.82 5.28,4.89 2.72,9.34 0.16,9.29 -1.32,7 -6.59,7.12 -8.13,4.45 -6.88,2.13 -9.44,-2.31 -8.12,-4.51 -5.41,-4.64" fill="#ffffff"/><polygon points="-2.45,-8.61 -1.3,-6.73 -2.36,-4.78 7.26,-4.78 6.25,-2.45 -3.19,-2.45 -4.48,-4.9" fill="#3477c6"/><polygon points="8.68,2.19 6.47,2.24 5.32,0.35 0.51,8.67 -1.01,6.64 3.71,-1.53 6.48,-1.43" fill="#3477c6"/><polygon points="-6.24,6.43 -5.18,4.49 -2.96,4.43 -7.77,-3.9 -5.25,-4.19 -0.53,3.98 -2,6.33" fill="#3477c6"/></svg><div class="s" style="left:1373px;">Cell 1 of 6</div><div class="abs" style="left:1469.5px;top:4.8px;"><svg width="18.5" height="18.5" viewBox="0 0 16 16" fill="none" stroke="#ffffff" stroke-width="1" stroke-linejoin="round" stroke-linecap="round"><circle cx="8" cy="7" r="1.7" fill="#fff" stroke="none"/><path d="M8 8.5v6" stroke-width="1.6"/><path d="M5.3 9.8a3.9 3.9 0 1 1 5.4 0M3.6 11.6a6.3 6.3 0 1 1 8.8 0"/></svg></div><div class="s" style="left:1492px;"><span style="letter-spacing:.15px">Go Live</span></div><div class="s" style="left:1573px;font-weight:bold;font-size:13.5px;letter-spacing:.5px;transform:scaleX(1.13);transform-origin:0 50%;top:5px">CODEGPT</div><div class="abs" style="left:1678px;top:4.8px;"><svg width="18.5" height="18.5" viewBox="0 0 16 16" fill="#ffffff"><path d="M14.431 3.323l-8.47 10-.79-.036-3.35-4.77.818-.574 2.978 4.24 8.051-9.506.764.646z"/></svg></div><div class="s" style="left:1701.8px;"><span style="letter-spacing:.28px">Continue (NE)</span></div><div class="abs" style="left:1823.5px;top:4.8px;"><svg width="19.5" height="19.5" viewBox="0 0 16 16" fill="none" stroke="#ffffff" stroke-width="1" stroke-linejoin="round" stroke-linecap="round"><path d="M1.2 8.8l2.6 3.7L10.3 4M6.3 10.2l1.7 2.3L14.8 4"/></svg></div><div class="s" style="left:1848px;">Prettier</div><div class="abs" style="left:1922.5px;top:4.8px;"><svg width="19" height="19" viewBox="0 0 16 16" fill="none" stroke="#ffffff" stroke-width="1.05" stroke-linejoin="round" stroke-linecap="round"><path d="M8 1.8c-2.5 0-4.3 1.9-4.3 4.4v3.6L2.5 12h11l-1.2-2.2V6.2c0-2.5-1.8-4.4-4.3-4.4zM6.5 13.3c.2.7.8 1.1 1.5 1.1s1.3-.4 1.5-1.1" /></svg></div></div>
</div>
<div class="abs" style="left:543.5px;top:137.8px;width:332.7px;height:39.1px;border:4.2px solid #e5484d;border-radius:3.5px"></div><svg class="abs" style="left:0;top:0" width="2000" height="1163" viewBox="0 0 2000 1163"><path d="M864.4 193.2L903.4 188L895.2 195.8L995.2 235.6L890.8 209.4L893.2 220.6Z" fill="#e5484d"/></svg><svg class="abs" style="left:0;top:0" width="2000" height="1163" viewBox="0 0 2000 1163"><defs><linearGradient id="ag" x1="0" y1="0" x2="1" y2="1"><stop offset="0.1" stop-color="#e8467f"/><stop offset="0.9" stop-color="#f27658"/></linearGradient>
<mask id="am" maskUnits="userSpaceOnUse" x="1680" y="950" width="70" height="70"><rect x="1680" y="950" width="70" height="70" fill="#000"/><circle cx="1714.9" cy="986.1" r="29.4" fill="#fff"/><circle cx="1714.6" cy="972.6" r="15.4" fill="#000"/><path d="M1700 950h30v11.5l-4.5-1.2h-22l-3.5 1.2z" fill="#000"/>
<path d="M1686 998.5l4.8 1.2-2.8 3.2zM1707 1016.5l3.6-3 1.4 4.2zM1727.5 1013.5l2.2-4.2 2.6 2.8z" fill="#000"/>
<path d="M1725.4 982.6l.4 5.4 4.8-2.2 1.1 6.6 4.7-2.6 1.1 7 4.8-2.6" fill="none" stroke="#000" stroke-width="1.7"/></mask></defs>
<rect x="1680" y="950" width="70" height="70" fill="url(#ag)" mask="url(#am)"/></svg><div class="abs" style="left:1756.4px;top:957px;font-size:43px;font-weight:bold;color:#2e3456;line-height:56px;letter-spacing:-2px">Apifox</div>
</body>
</html>
